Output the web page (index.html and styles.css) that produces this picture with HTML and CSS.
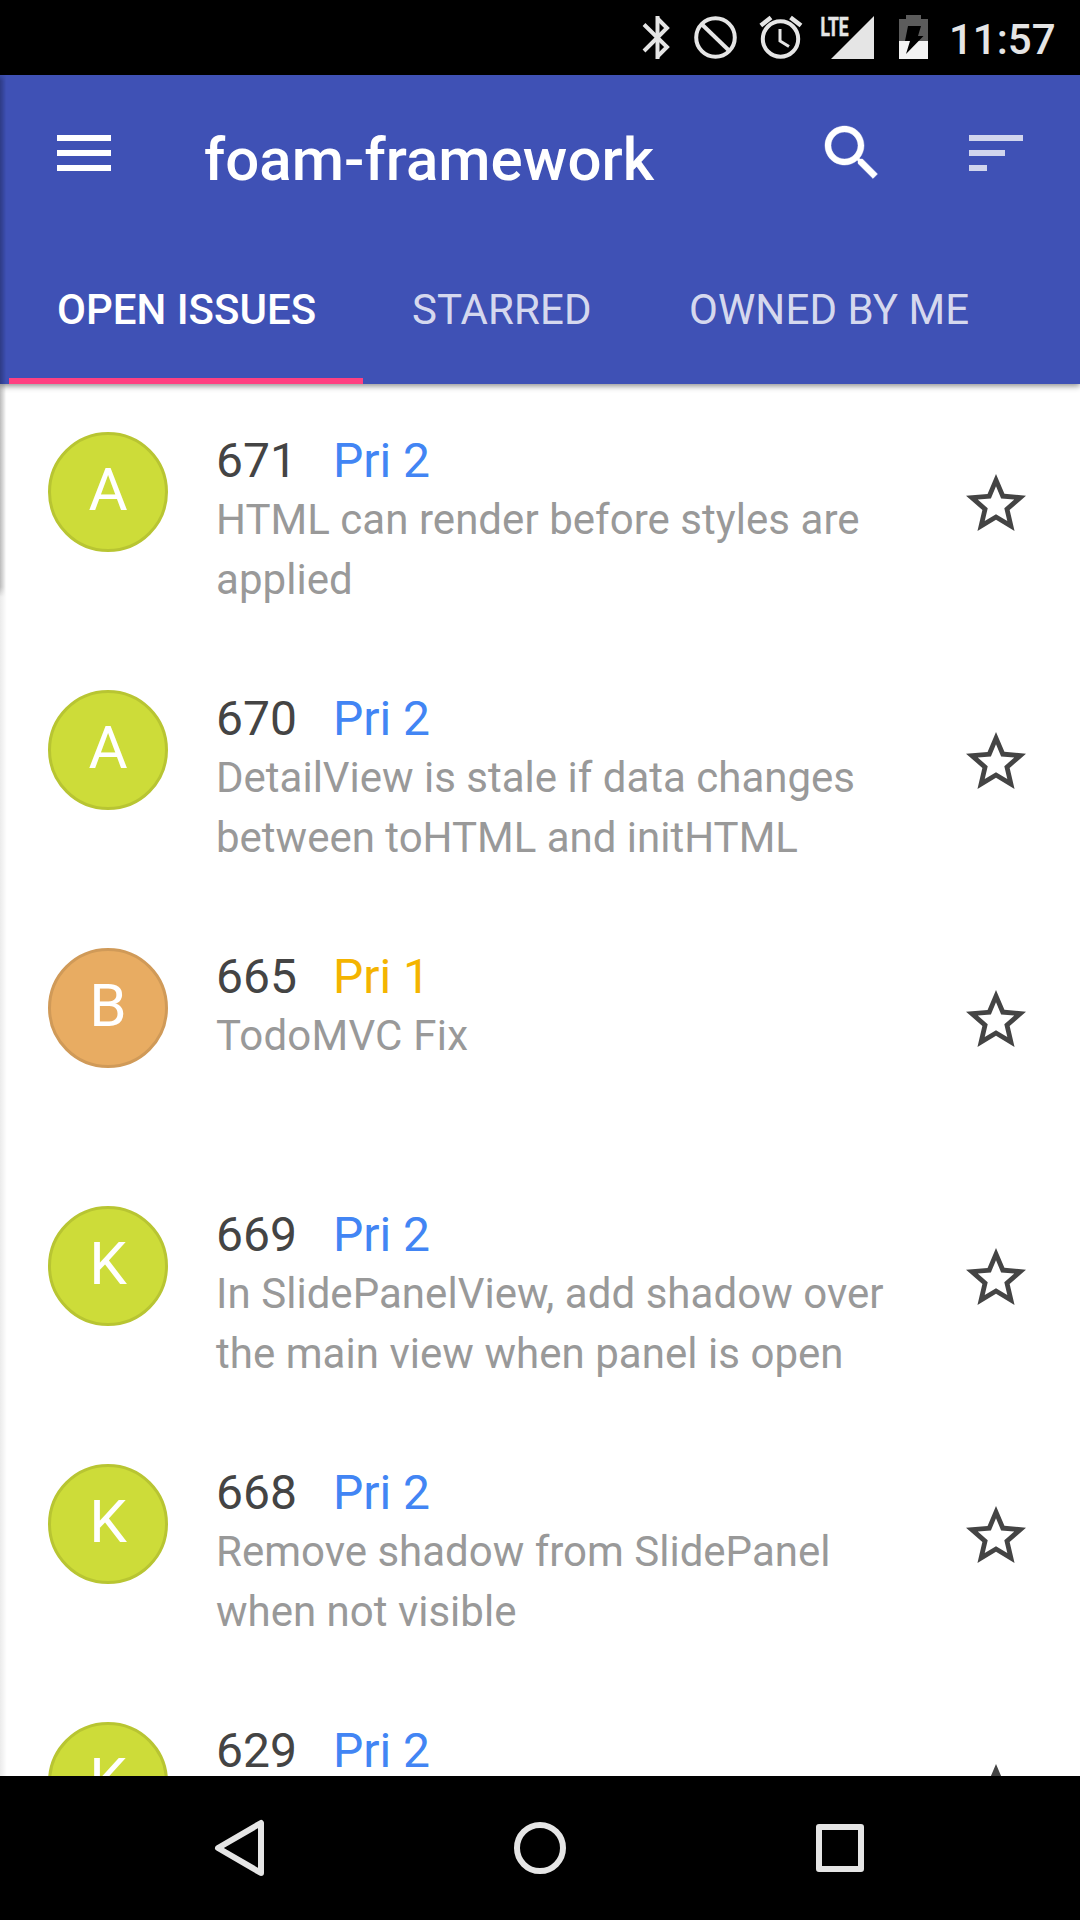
FILE: index.html
```html
<!DOCTYPE html>
<html lang="en">
<head>
<meta charset="utf-8">
<title>foam-framework</title>
<link rel="stylesheet" href="styles.css">
</head>
<body>
<svg class="sprite" aria-hidden="true">
  <symbol id="star" viewBox="0 0 24 24"><path d="M22 9.24l-7.19-.62L12 2 9.19 8.63 2 9.24l5.46 4.73L5.82 21 12 17.27 18.18 21l-1.63-7.03L22 9.24zM12 15.4l-3.76 2.27 1-4.28-3.32-2.88 4.38-.38L12 6.1l1.71 4.04 4.38.38-3.32 2.88 1 4.28L12 15.4z"/></symbol>
</svg>
<div class="screen">
  <div class="status">
    <svg class="status-icons" viewBox="0 0 309 75" width="309" height="75">
      <g fill="none" stroke="#e5e5e5" stroke-width="4">
        <path d="M4 24.500L27 47 17.500 56.500M4 51L27 28 17.500 18.500"/>
        <path d="M17.500 16V59" stroke-width="4"/>
        <circle cx="75.500" cy="37.500" r="19.300"/>
        <path d="M61.500 24L89.500 51"/>
        <circle cx="140.500" cy="39" r="17.700" stroke-width="4"/>
        <path d="M140 29V41L149 46.500" stroke-width="3"/>
        <path d="M120.800 25.500L131 17.500M150.500 17.500L161 25.500" stroke-width="4.500"/>
      </g>
      <text class="lte" x="180.500" y="35.500" textLength="28" lengthAdjust="spacingAndGlyphs">LTE</text>
      <path fill="#e5e5e5" d="M234 16V59H191z"/>
      <path fill="#5c5c5c" d="M266 15h15v4h7v22h-29V19h7z"/>
      <path fill="#f2f2f2" d="M259 41h29v18h-29z"/>
      <path fill="#000" d="M268 26h13l-3 10h5.500L266 54l4-13h-5z"/>
    </svg>
    <span class="clock">11:57</span>
  </div>
  <div class="app">
    <header class="header">
      <div class="toolbar">
        <svg class="icon" viewBox="0 0 24 24"><path d="M3 18h18v-2H3v2zm0-5h18v-2H3v2zm0-7v2h18V6H3z"/></svg>
        <h1 class="title">foam-framework</h1>
        <svg class="icon" viewBox="0 0 24 24"><path stroke="#fff" stroke-width=".15" d="M15.500 14h-.79l-.28-.27C15.410 12.590 16 11.110 16 9.500 16 5.910 13.090 3 9.500 3S3 5.910 3 9.500 5.910 16 9.500 16c1.610 0 3.090-.59 4.230-1.570l.27.28v.79l5 4.990L20.490 19l-4.990-5zm-6 0C7.010 14 5 11.990 5 9.500S7.010 5 9.500 5 14 7.010 14 9.500 11.990 14 9.500 14z"/></svg>
        <svg class="icon sort" viewBox="0 0 24 24"><path d="M3 18h6v-2H3v2zM3 6v2h18V6H3zm0 7h12v-2H3v2z"/></svg>
      </div>
      <nav class="tabs">
        <div class="tab active">OPEN ISSUES</div>
        <div class="tab starred">STARRED</div>
        <div class="tab">OWNED BY ME</div>
      </nav>
    </header>
    <main class="list">
      <div class="row"><div class="avatar">A</div><div class="body"><div class="head"><span class="num">671</span><span class="pri">Pri 2</span></div><p class="summary">HTML can render before styles are applied</p></div><svg class="star"><use href="#star"/></svg></div>
      <div class="row"><div class="avatar">A</div><div class="body"><div class="head"><span class="num">670</span><span class="pri">Pri 2</span></div><p class="summary tight">DetailView is stale if data changes between toHTML and initHTML</p></div><svg class="star"><use href="#star"/></svg></div>
      <div class="row"><div class="avatar orange">B</div><div class="body"><div class="head"><span class="num">665</span><span class="pri high">Pri 1</span></div><p class="summary loose">TodoMVC Fix</p></div><svg class="star"><use href="#star"/></svg></div>
      <div class="row"><div class="avatar">K</div><div class="body"><div class="head"><span class="num">669</span><span class="pri">Pri 2</span></div><p class="summary">In SlidePanelView, add shadow over the main view when panel is open</p></div><svg class="star"><use href="#star"/></svg></div>
      <div class="row"><div class="avatar">K</div><div class="body"><div class="head"><span class="num">668</span><span class="pri">Pri 2</span></div><p class="summary tight">Remove shadow from SlidePanel when not visible</p></div><svg class="star"><use href="#star"/></svg></div>
      <div class="row"><div class="avatar">K</div><div class="body"><div class="head"><span class="num">629</span><span class="pri">Pri 2</span></div></div><svg class="star"><use href="#star"/></svg></div>
    </main>
    <div class="edge"></div>
    <div class="edge-top"></div>
  </div>
  <footer class="navbar">
    <svg viewBox="0 0 72 72"><path d="M57 11V61L14 36z"/></svg>
    <svg viewBox="0 0 72 72"><circle cx="36" cy="36" r="23"/></svg>
    <svg viewBox="0 0 72 72"><rect x="15" y="15" width="42" height="42"/></svg>
  </footer>
</div>
</body>
</html>
```
FILE: styles.css
```css
* { box-sizing: border-box; }
body {
  margin: 0;
  font-family: Roboto, sans-serif;
  background: #000;
}
.sprite { display: none; }
.screen {
  width: 1080px;
  height: 1920px;
  display: flex;
  flex-direction: column;
  overflow: hidden;
}
.status {
  height: 75px;
  flex: none;
  display: flex;
  justify-content: flex-end;
  align-items: center;
  padding-right: 25px;
  background: #000;
}
.status-icons { flex: none; }
.lte {
  font: 700 26px Roboto, sans-serif;
  fill: #e5e5e5;
  stroke: #e5e5e5;
  stroke-width: .6;
}
.clock {
  width: 106px;
  font-size: 42px;
  font-weight: 500;
  line-height: 75px;
  color: #e5e5e5;
  text-align: right;
  padding-top: 3px;
}
.app {
  position: relative;
  flex: 1;
  min-height: 0;
  display: flex;
  flex-direction: column;
  background: #fff;
  overflow: hidden;
}
.header {
  flex: none;
  height: 309px;
  display: flex;
  flex-direction: column;
  justify-content: space-between;
  background: #3f51b5;
  color: #fff;
  box-shadow: 0 2px 6px rgba(0, 0, 0, .45);
  z-index: 1;
}
.toolbar {
  display: flex;
  align-items: flex-start;
  padding: 42px 48px 0;
}
.icon {
  width: 72px;
  height: 72px;
  fill: #fff;
}
.sort { margin-left: 72px; opacity: .76; }
.title {
  flex: 1;
  margin: 8px 0 0 84px;
  font-size: 60px;
  font-weight: 500;
  line-height: 70px;
  letter-spacing: .05px;
}
.tabs {
  display: flex;
  height: 144px;
  padding-left: 9px;
}
.tab {
  flex: none;
  padding: 0 48px;
  font-size: 42px;
  line-height: 140px;
  letter-spacing: .1px;
  white-space: nowrap;
  color: rgba(255, 255, 255, .8);
}
.tab.active {
  width: 354px;
  letter-spacing: 0;
  font-weight: 500;
  color: #fff;
  border-bottom: 6px solid #ff4081;
}
.tab.starred {
  width: 278px;
  padding-left: 49px;
}
.row {
  height: 258px;
  display: flex;
  align-items: flex-start;
  padding: 48px 48px 0;
}
.avatar {
  flex: none;
  width: 120px;
  height: 120px;
  border: 3px solid #b8c532;
  border-radius: 50%;
  background: #cddc39;
  color: #fff;
  font-size: 60px;
  line-height: 110px;
  text-align: center;
}
.avatar.orange {
  background: #e8ac62;
  border-color: #d09a58;
}
.body {
  flex: none;
  width: 696px;
  margin-left: 48px;
  padding-top: 1px;
}
.head {
  display: flex;
  gap: 36px;
  font-size: 48px;
  line-height: 56px;
}
.num { color: #444; }
.pri { color: #4285f4; }
.pri.high { color: #f4b400; }
.summary {
  margin: 1px 0 0;
  font-size: 42px;
  line-height: 60px;
  letter-spacing: .04px;
  color: #999;
}
.summary.tight { letter-spacing: 0; }
.summary.loose { letter-spacing: .22px; }
.star {
  flex: none;
  width: 72px;
  height: 72px;
  margin: 36px 0 0 48px;
  fill: #444;
}
.edge, .edge-top {
  position: absolute;
  left: 0;
  top: 0;
  z-index: 2;
}
.edge {
  width: 7px;
  height: 100%;
  background: linear-gradient(to right, rgba(0, 0, 0, .08), transparent);
}
.edge-top {
  width: 6px;
  height: 522px;
  background: linear-gradient(to right, rgba(0, 0, 0, .2), transparent);
  mask-image: linear-gradient(transparent, #000 6px, #000 512px, transparent);
}
.navbar {
  flex: none;
  height: 144px;
  display: flex;
  justify-content: center;
  align-items: center;
  gap: 228px;
  background: #000;
}
.navbar svg {
  width: 72px;
  height: 72px;
  fill: none;
  stroke: #e5e5e5;
  stroke-width: 6;
  stroke-linejoin: round;
}
```
